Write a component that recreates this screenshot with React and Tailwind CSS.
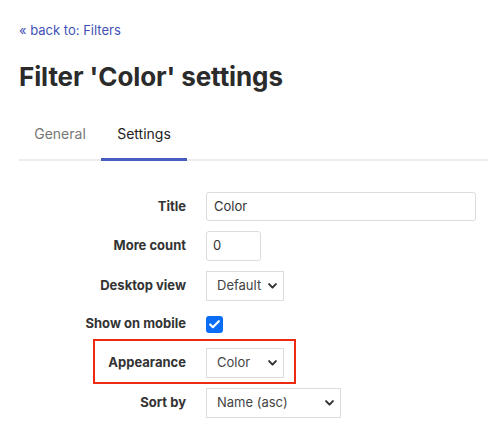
import { Check } from 'lucide-react';

function Chevron() {
  return (
    <svg width="9" height="6" viewBox="0 0 9 6" className="shrink-0">
      <path d="M1.1 1.1 L4.5 4.6 L7.9 1.1" fill="none" stroke="#333" strokeWidth="2" strokeLinecap="round" strokeLinejoin="round" />
    </svg>
  );
}

function Select({ value, width }) {
  return (
    <div className={`${width} h-[30px] border border-[#dcdcdc] bg-white flex items-center justify-between pl-[10px] pr-[6px] text-[13px] text-[#444]`}>
      <span>{value}</span>
      <Chevron />
    </div>
  );
}

function Row({ label, children, className = '' }) {
  return (
    <div className={`flex items-center gap-[20px] ${className}`}>
      <div className="w-[167px] text-right text-[13px] font-bold text-[#333]">{label}</div>
      {children}
    </div>
  );
}

export default function App() {
  return (
    <div className="font-['Inter',sans-serif] bg-white w-[488px] h-[421px] overflow-hidden pl-[19px] pt-[22px] text-[#333]">
      {/* Back link */}
      <a className="block text-[13px] leading-[16px] text-[#3f51b5]">« back to: Filters</a>

      <h1 className="mt-[23px] text-[26px] leading-[32px] font-bold text-[#2b2b2b] tracking-[-0.1px]">
        Filter 'Color' settings
      </h1>

      {/* Tabs */}
      <div className="mt-[21px] flex border-b-2 border-[#ececec] text-[14px] leading-[20px]">
        <div className="w-[82px] text-center pt-[10px] pb-[15px] text-[#777]">General</div>
        <div className="w-[86px] text-center pt-[10px] pb-[13px] -mb-[2px] border-b-[3px] border-[#4a5cc0] text-[#222]">Settings</div>
      </div>

      {/* Form */}
      <div className="mt-[31px] flex flex-col">
        <Row label="Title">
          <div className="w-[270px] h-[29px] border border-[#dcdcdc] rounded-[3px] flex items-center px-[7px] text-[13px] text-[#333]">
            Color
          </div>
        </Row>

        <Row label="More count" className="mt-[10px]">
          <div className="w-[55px] h-[30px] border border-[#dcdcdc] rounded-[3px] flex items-center px-[6px] text-[13px] text-[#333]">
            0
          </div>
        </Row>

        <Row label="Desktop view" className="mt-[10px]">
          <Select value="Default" width="w-[78px]" />
        </Row>

        <Row label="Show on mobile" className="mt-[8px] h-[30px]">
          <div className="w-[17px] h-[17px] rounded-[3px] bg-[#0b6cf5] flex items-center justify-center">
            <Check className="w-[13px] h-[13px] text-white" strokeWidth={4} />
          </div>
        </Row>

        {/* Highlighted row */}
        <div className="ml-[74px] w-[203px] border-2 border-[#ee2a12] pt-[7px] pb-[4px] flex items-center gap-[20px]">
          <div className="w-[91px] text-right text-[13px] font-bold text-[#333]">Appearance</div>
          <Select value="Color" width="w-[78px]" />
        </div>

        <Row label="Sort by" className="mt-[4px]">
          <Select value="Name (asc)" width="w-[135px]" />
        </Row>
      </div>
    </div>
  );
}
